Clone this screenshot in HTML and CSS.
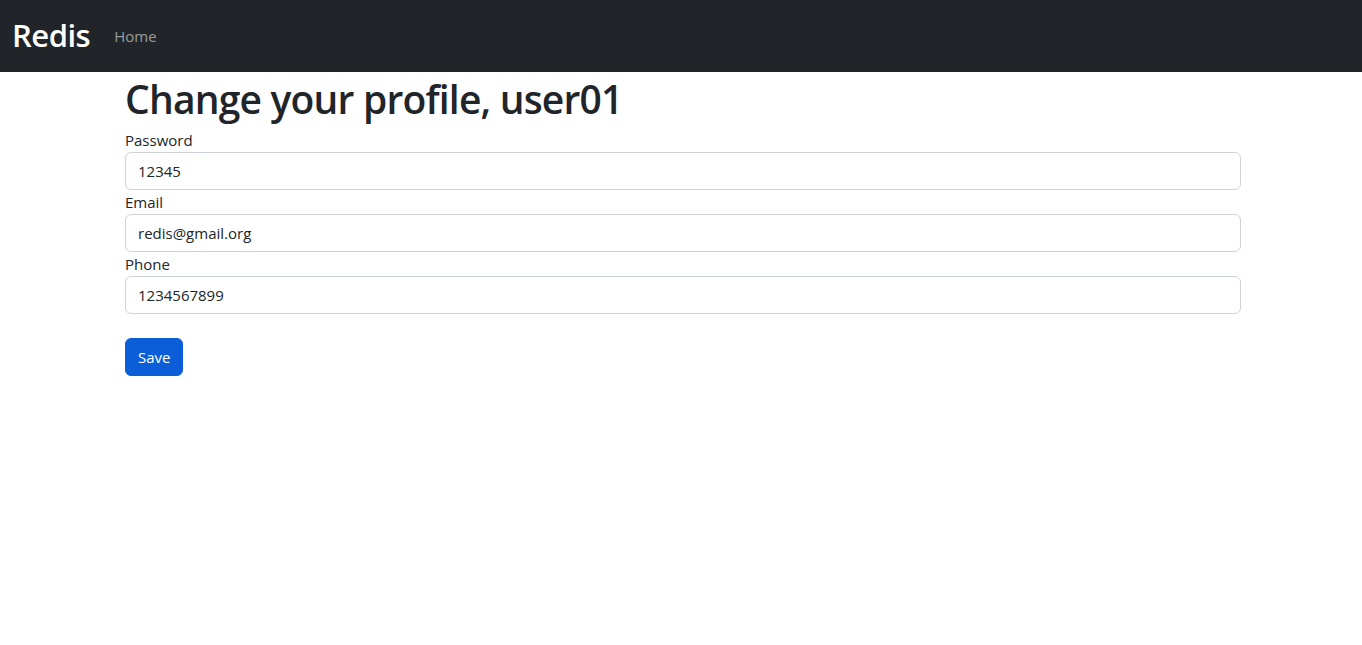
FILE: index.html
```html
<!DOCTYPE html>
<html lang="en">
<head>
<meta charset="utf-8">
<title>Change your profile</title>
<link rel="stylesheet" href="styles.css">
</head>
<body>
<nav class="navbar">
  <a class="brand" href="#"><h2 class="brand-text">Redis</h2></a>
  <a class="nav-link" href="#">Home</a>
</nav>
<main class="container">
  <h1 class="title">Change your profile, user01</h1>
  <form class="form">
    <label class="label" for="pw">Password</label>
    <input class="input" id="pw" type="text" value="12345">
    <label class="label" for="em">Email</label>
    <input class="input" id="em" type="text" value="redis@gmail.org">
    <label class="label" for="ph">Phone</label>
    <input class="input" id="ph" type="text" value="1234567899">
    <div class="actions">
      <button class="btn" type="button">Save</button>
    </div>
  </form>
</main>
</body>
</html>
```
FILE: styles.css
```css
* { box-sizing: border-box; }
html, body { margin: 0; padding: 0; }
body {
  font-family: "Open Sans", "Noto Sans", sans-serif;
  font-size: 16px;
  line-height: 1.5;
  color: #212529;
  background: #fff;
}
.navbar {
  background: #212529;
  height: 72px;
  padding: 0 12px;
  display: flex;
  align-items: center;
}
.brand {
  color: #fff;
  text-decoration: none;
  margin-right: 16px;
}
.brand-text {
  margin: 0;
  font-size: 31px;
  font-weight: 600;
  line-height: 1.2;
  letter-spacing: -0.5px;
}
.nav-link {
  color: rgba(255,255,255,.55);
  text-decoration: none;
  padding: 8px;
  font-size: 15px;
}
.container {
  width: 1116px;
  margin-left: 125px;
}
.title {
  margin: 0 0 5px;
  padding-top: 3px;
  font-size: 39px;
  font-weight: 600;
  line-height: 48px;
  letter-spacing: -0.8px;
}
.form { display: flex; flex-direction: column; }
.label {
  display: block;
  font-size: 15px;
  line-height: 24px;
  height: 24px;
}
.input {
  display: block;
  width: 100%;
  height: 38px;
  padding: 6px 12px;
  font-family: inherit;
  font-size: 15px;
  color: #212529;
  border: 1px solid #ced4da;
  border-radius: 6px;
  background: #fff;
}
.actions { margin-top: 24px; }
.btn {
  background: #0b5ed7;
  color: #fff;
  border: 1px solid #0b5ed7;
  border-radius: 6px;
  height: 38px;
  padding: 6px 12px;
  font-family: inherit;
  font-size: 15px;
  line-height: 24px;
}
```
